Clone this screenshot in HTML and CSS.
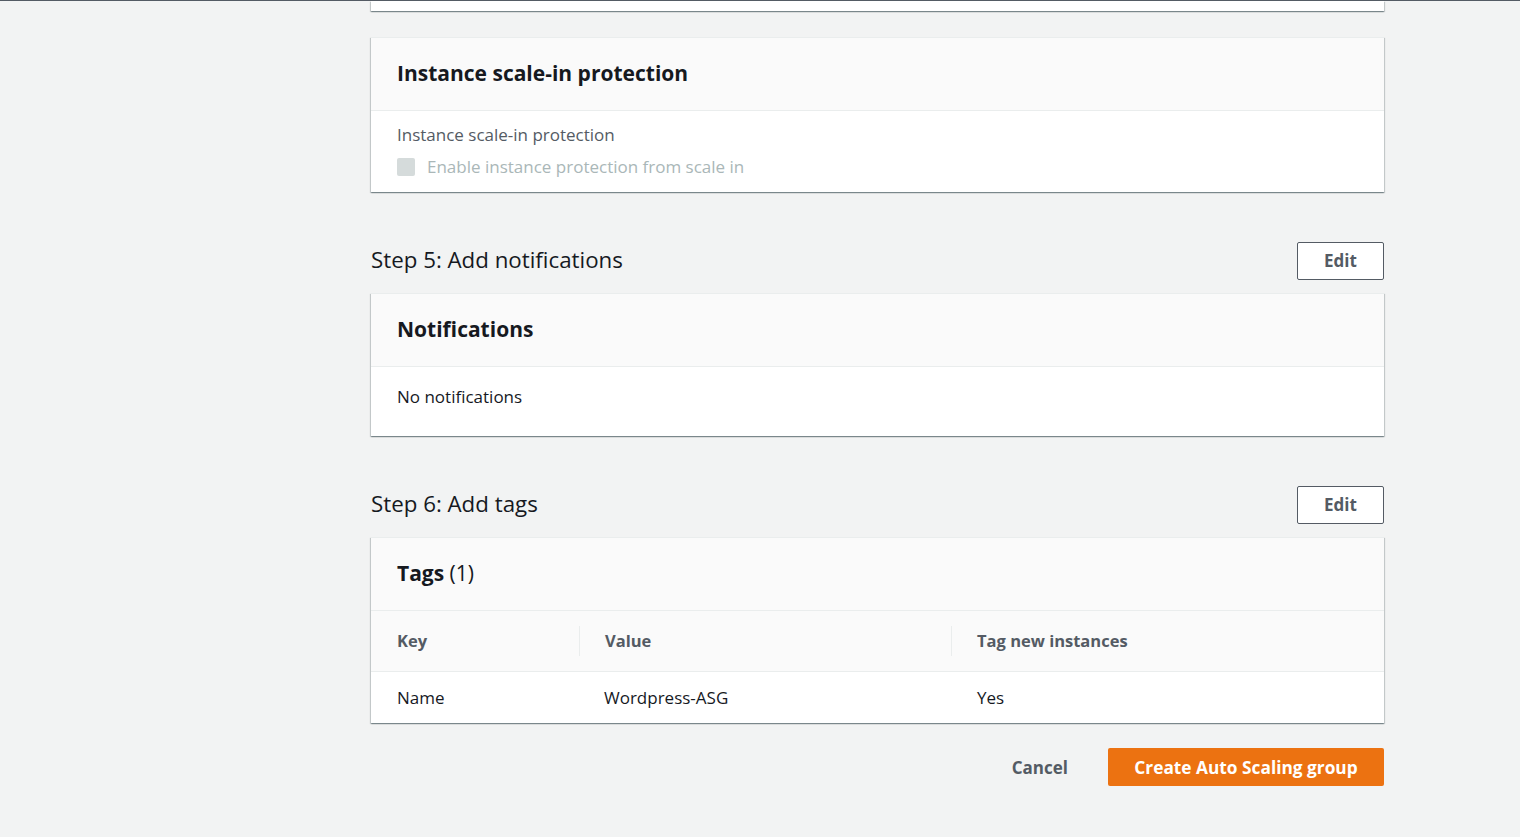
FILE: index.html
```html
<!DOCTYPE html>
<html>
<head>
<meta charset="utf-8">
<link rel="stylesheet" href="styles.css">
</head>
<body>
<div class="topline"></div>
<main class="content">
  <div class="card prev-card"></div>

  <section class="card first-card">
    <div class="card-header"><h2 class="card-title">Instance scale-in protection</h2></div>
    <div class="card-body protect-body">
      <div class="field-label">Instance scale-in protection</div>
      <label class="checkbox-row">
        <span class="checkbox"></span>
        <span class="checkbox-text">Enable instance protection from scale in</span>
      </label>
    </div>
  </section>

  <div class="step-row">
    <h1 class="step-title">Step 5: Add notifications</h1>
    <button class="btn-edit">Edit</button>
  </div>
  <section class="card">
    <div class="card-header"><h2 class="card-title">Notifications</h2></div>
    <div class="card-body notif-body">No notifications</div>
  </section>

  <div class="step-row">
    <h1 class="step-title">Step 6: Add tags</h1>
    <button class="btn-edit">Edit</button>
  </div>
  <section class="card">
    <div class="card-header"><h2 class="card-title">Tags <span class="count">(1)</span></h2></div>
    <div class="table">
      <div class="thead">
        <div class="th c1">Key</div>
        <div class="th c2"><span class="divider"></span>Value</div>
        <div class="th c3"><span class="divider"></span>Tag new instances</div>
      </div>
      <div class="trow">
        <div class="td c1">Name</div>
        <div class="td c2">Wordpress-ASG</div>
        <div class="td c3">Yes</div>
      </div>
    </div>
  </section>

  <div class="actions">
    <button class="btn-link">Cancel</button>
    <button class="btn-primary">Create Auto Scaling group</button>
  </div>
</main>
</body>
</html>
```
FILE: styles.css
```css
* { box-sizing: border-box; }
html, body { margin: 0; padding: 0; }
body {
  background: #f2f3f3;
  font-family: "Open Sans", "Noto Sans", Arial, sans-serif;
  color: #16191f;
  font-size: 17px;
  height: 837px;
  overflow: hidden;
}
.topline { height: 1px; background: #545b64; }
.content {
  width: 1013px;
  margin-left: 371px;
  display: flex;
  flex-direction: column;
}
.card {
  background: #fff;
  box-shadow: 0 1px 1px 0 rgba(0,28,36,.3), 1px 1px 1px 0 rgba(0,28,36,.15), -1px 1px 1px 0 rgba(0,28,36,.15);
}
.prev-card { height: 10px; }
.first-card { margin-top: 26px; }
.card-header {
  background: #fafafa;
  border-top: 1px solid #eaeded;
  border-bottom: 1px solid #eaeded;
  height: 74px;
  display: flex;
  align-items: center;
  padding: 0 26px 2px;
}
.card-title {
  margin: 0;
  font-size: 21px;
  font-weight: 700;
  line-height: 26px;
}
.count { font-weight: 400; }
.card-body { padding: 0 26px; }
.protect-body { height: 81px; padding-top: 12px; }
.field-label { color: #545b64; line-height: 24px; }
.checkbox-row { display: flex; align-items: center; gap: 12px; margin-top: 8px; }
.checkbox {
  width: 18px; height: 18px;
  background: #d5dbdb;
  border-radius: 2px;
}
.checkbox-text { color: #aab7b8; line-height: 24px; }
.notif-body { height: 69px; padding-top: 18px; line-height: 24px; }
.step-row {
  margin-top: 50px;
  margin-bottom: 13px;
  height: 38px;
  display: flex;
  align-items: center;
  justify-content: space-between;
}
.step-title {
  margin: 0 0 2px;
  font-size: 22.3px;
  font-weight: 400;
  line-height: 28px;
}
.btn-edit {
  width: 87px; height: 38px;
  background: #fff;
  border: 1px solid #545b64;
  border-radius: 2px;
  color: #545b64;
  font-family: inherit;
  font-size: 17px;
  font-weight: 700;
  padding: 0 0 2px;
}
.table { display: flex; flex-direction: column; }
.thead, .trow { display: flex; }
.thead { height: 61px; background: #fafafa; border-bottom: 1px solid #eaeded; align-items: center; }
.trow { height: 51px; align-items: center; }
.th, .td { padding-left: 26px; position: relative; line-height: 24px; }
.th { color: #545b64; font-weight: 700; font-size: 16.5px; }
.c1 { width: 208px; }
.c2 { width: 372px; }
.c3 { flex: 1; }
.td.c2 { padding-left: 25px; }
.divider {
  position: absolute;
  left: 0; top: -3px;
  width: 1px; height: 30px;
  background: #eaeded;
}
.actions {
  margin-top: 25px;
  display: flex;
  justify-content: flex-end;
  align-items: center;
  gap: 40px;
}
.btn-link {
  background: none; border: none;
  font-family: inherit;
  font-size: 17px; font-weight: 700;
  color: #545b64;
  padding: 0;
}
.btn-primary {
  height: 38px;
  width: 276px;
  background: #ec7211;
  border: none;
  border-radius: 2px;
  color: #fff;
  font-family: inherit;
  font-size: 17.3px;
  font-weight: 700;
  padding: 0;
}
```
